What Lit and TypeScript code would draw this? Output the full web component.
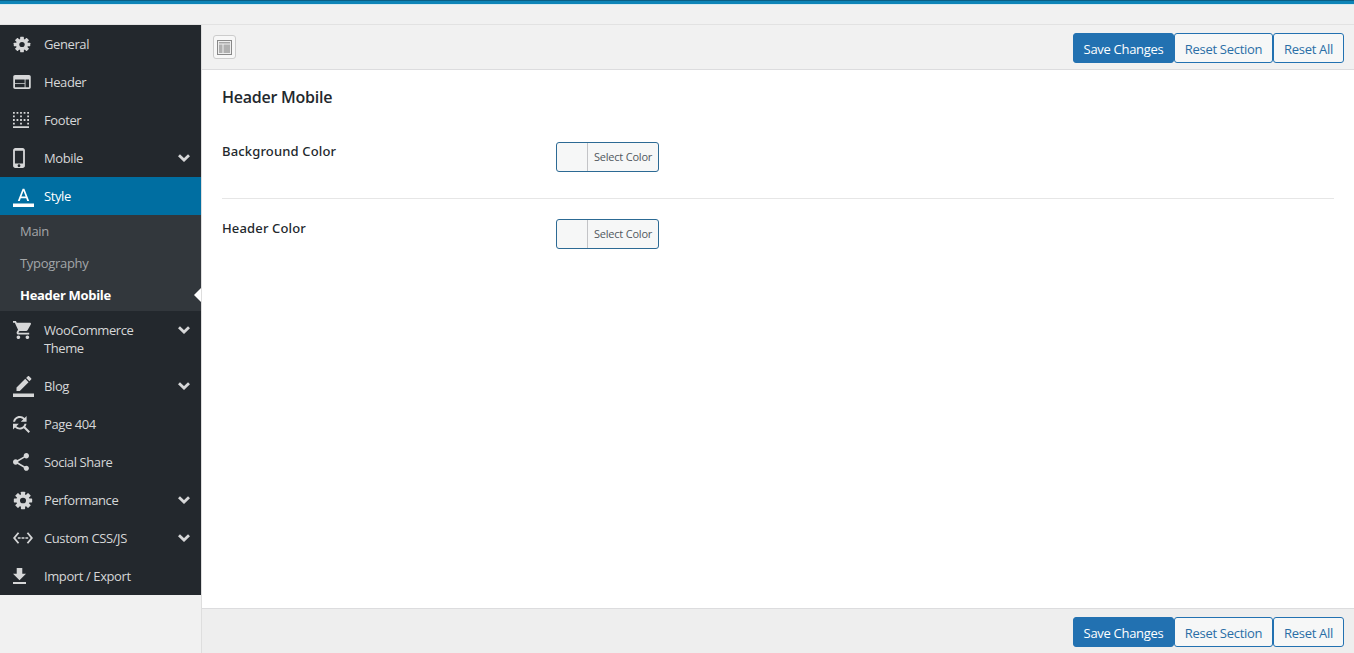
import { LitElement, html, css, svg } from "lit";
import { customElement } from "lit/decorators.js";

const gearShape = svg`
  <g fill="currentColor">
    <circle cx="12" cy="12" r="8"/>
    ${[0, 45, 90, 135, 180, 225, 270, 315].map((a) => svg`<rect x="9.500" y="1" width="5" height="5" rx=".6" transform="rotate(${a} 12 12)"/>`)}
  </g>
  <circle cx="12" cy="12" r="3.600" fill="#23282d"/>`;

const ic = (cls: string, vb: string, d: string) =>
  html`<svg class="ic ${cls}" viewBox=${vb} fill="currentColor"><path d=${d}/></svg>`;

const icons: Record<string, unknown> = {
  general: html`<svg class="ic i-gen" viewBox="0 0 24 24" preserveAspectRatio="none">${gearShape}</svg>`,
  header: ic("i-hdr", "2 4 20 16", "M20 4H4c-1.100 0-2 .9-2 2v12c0 1.100.9 2 2 2h16c1.100 0 2-.9 2-2V6c0-1.100-.9-2-2-2zm-5 14H4v-4h11v4zm0-5H4V9h11v4zm5 5h-4V9h4v9z"),
  footer: ic("i-ftr", "3 3 18 18", "M9 11H7v2h2v-2zm4 4h-2v2h2v-2zM9 3H7v2h2V3zm4 8h-2v2h2v-2zM5 3H3v2h2V3zm8 4h-2v2h2V7zm4 4h-2v2h2v-2zm-4-8h-2v2h2V3zm4 0h-2v2h2V3zm2 10h2v-2h-2v2zm0 4h2v-2h-2v2zM5 7H3v2h2V7zm14-4v2h2V3h-2zm0 6h2V7h-2v2zM5 11H3v2h2v-2zM3 21h18v-2H3v2zm2-6H3v2h2v-2z"),
  mobile: ic("i-mob", "5 1 13 22", "M15.500 1h-8C6.120 1 5 2.120 5 3.500v17C5 21.880 6.120 23 7.500 23h8c1.380 0 2.500-1.120 2.500-2.500v-17C18 2.120 16.880 1 15.500 1zm-4 21c-.830 0-1.500-.670-1.500-1.500s.670-1.500 1.500-1.500 1.500.670 1.500 1.500-.670 1.500-1.500 1.500zm4.500-4H7V4h9v14z"),
  style: ic("i-24", "0 0 24 24", "M0 20h24v4H0zM11 3 5.500 17h2.250l1.120-3h6.250l1.120 3h2.250L13 3h-2zm-1.380 9L12 5.670 14.380 12H9.620z"),
  cart: ic("i-cart", "1 2 20 20", "M7 18c-1.100 0-1.990.9-1.990 2S5.900 22 7 22s2-.9 2-2-.9-2-2-2zM1 2v2h2l3.600 7.590-1.350 2.450c-.16.280-.25.610-.25.960 0 1.100.9 2 2 2h12v-2H7.420c-.140 0-.250-.110-.250-.250l.030-.120.900-1.630h7.450c.750 0 1.410-.410 1.750-1.030l3.580-6.490c.080-.140.120-.310.120-.480 0-.550-.450-1-1-1H5.210l-.940-2H1zm16 16c-1.100 0-1.990.900-1.990 2s.890 2 1.990 2 2-.900 2-2-.900-2-2-2z"),
  blog: ic("i-24", "0 0 24 24", "M17.750 7 14 3.250l-10 10V17h3.750l10-10zm2.960-2.960c.390-.390.390-1.020 0-1.410L18.370.290c-.390-.390-1.020-.390-1.410 0L15 2.250 18.750 6l1.960-1.960zM0 20h24v4H0z"),
  page: ic("i-find", "4 4 17.500 17.500", "M11 6c1.380 0 2.630.560 3.540 1.460L12 10h6V4l-2.050 2.050C14.680 4.780 12.930 4 11 4c-3.530 0-6.430 2.610-6.920 6H6.100c.460-2.280 2.480-4 4.900-4zm5.640 9.140c.660-.900 1.110-1.970 1.280-3.140H15.900c-.460 2.280-2.480 4-4.900 4-1.380 0-2.630-.560-3.540-1.460L10 12H4v6l2.050-2.050C7.320 17.220 9.070 18 11 18c1.550 0 2.980-.510 4.140-1.360L20 21.490 21.490 20l-4.850-4.860z"),
  share: ic("i-share", "3 2 18 20", "M18 16.080c-.760 0-1.440.300-1.960.770L8.910 12.700c.050-.230.090-.460.090-.700s-.040-.470-.090-.700l7.050-4.110c.540.500 1.250.810 2.040.810 1.660 0 3-1.340 3-3s-1.340-3-3-3-3 1.340-3 3c0 .240.040.470.090.700L8.040 9.810C7.500 9.310 6.790 9 6 9c-1.660 0-3 1.340-3 3s1.340 3 3 3c.790 0 1.500-.310 2.040-.810l7.120 4.160c-.050.210-.080.430-.080.650 0 1.610 1.310 2.920 2.920 2.920 1.610 0 2.920-1.310 2.920-2.920s-1.310-2.920-2.920-2.920z"),
  perf: html`<svg class="ic i-perf" viewBox="0 0 24 24" preserveAspectRatio="none">${gearShape}</svg>`,
  code: ic("i-code", "0.800 5.400 22.400 13.200", "M7.770 6.760 6.230 5.480.820 12l5.410 6.520 1.540-1.280L3.420 12l4.350-5.240zM6.200 11.100h3.100v1.800H6.200zM10.400 11.100h3.200v1.800h-3.200zM14.700 11.100h3.100v1.800h-3.100zM17.770 5.480l-1.540 1.280L20.580 12l-4.350 5.240 1.540 1.280L23.180 12l-5.410-6.520z"),
  imp: ic("i-imp", "5 3 14 17", "M19 9h-4V3H9v6H5l7 7 7-7zM5 18v2h14v-2H5z"),
};

type Item = { key: string; label: string; arrow?: boolean; active?: boolean; tall?: boolean };
const items: Item[] = [
  { key: "general", label: "General" },
  { key: "header", label: "Header" },
  { key: "footer", label: "Footer" },
  { key: "mobile", label: "Mobile", arrow: true },
  { key: "style", label: "Style", active: true },
  { key: "cart", label: "WooCommerce Theme", arrow: true, tall: true },
  { key: "blog", label: "Blog", arrow: true },
  { key: "page", label: "Page 404" },
  { key: "share", label: "Social Share" },
  { key: "perf", label: "Performance", arrow: true },
  { key: "code", label: "Custom CSS/JS", arrow: true },
  { key: "imp", label: "Import / Export" },
];

@customElement("app-root")
export class AppRoot extends LitElement {
  static styles = css`
    :host { display: block; width: 1354px; height: 653px; overflow: hidden; background: #f1f1f1; font-family: "Open Sans", "Noto Sans", sans-serif; }
    .top { height: 5px; background: #0e85b8; border-top: 1px solid #0a5f85; border-bottom: 1px solid #d8ebf2; box-sizing: border-box; }
    .wrap { display: flex; margin-top: 19px; height: 629px; border-top: 1px solid #e2e2e2; box-sizing: border-box; }
    .side { width: 201px; flex: none; align-self: flex-start; background: #23282d; }
    .item { display: flex; align-items: center; height: 38px; color: #d6d7d8; font-size: 13px; letter-spacing: -0.4px; }
    .item.tall { height: 56px; box-sizing: border-box; align-items: flex-start; padding-top: 10px; line-height: 18px; }
    .item.tall .ico, .item.tall .chev { height: 18px; }
    .item.active { background: #006ea1; color: #fff; }
    .ico { width: 44px; flex: none; display: flex; align-items: center; padding-left: 13px; box-sizing: border-box; }
    .ic { display: block; flex: none; }
    .i-gen { width: 18px; height: 17px; }
    .i-perf { width: 20px; height: 19px; }
    .i-hdr { width: 18px; height: 14px; }
    .i-ftr { width: 16px; height: 16px; }
    .i-mob { width: 12px; height: 20px; }
    .i-24 { width: 21px; height: 21px; }
    .i-cart { width: 18px; height: 18px; }
    .i-find { width: 17px; height: 17px; }
    .i-share { width: 16px; height: 18px; }
    .i-code { width: 20px; height: 12px; }
    .i-imp { width: 13px; height: 16px; }
    .lbl { flex: 1; }
    .item.tall .lbl { max-width: 100px; }
    .chev { width: 12px; margin-right: 11px; margin-left: auto; display: flex; align-items: center; color: #d6d7d8; }
    .sub { background: #32373c; }
    .sub div { height: 32px; display: flex; align-items: center; padding-left: 20px; color: #a3a6a9; font-size: 13px; letter-spacing: -0.3px; position: relative; }
    .sub .cur { color: #fff; font-weight: 700; letter-spacing: -0.3px; }
    .sub .cur::after { content: ""; position: absolute; right: 0; top: 9px; border: 7px solid transparent; border-right-color: #fff; border-left-width: 0; }
    .main { flex: 1; display: flex; flex-direction: column; border-left: 1px solid #dedede; min-width: 0; }
    .bar { height: 44px; flex: none; background: #f1f1f1; border-bottom: 1px solid #dcdcde; display: flex; align-items: center; padding: 0 10px 0 11px; }
    .bar.bot { height: 45px; background: #eee; border-bottom: 0; border-top: 1px solid #dcdcde; box-sizing: border-box; }
    .tog { width: 23px; height: 24px; border: 1px solid #ccc; border-radius: 3px; background: #f7f7f7; box-sizing: border-box; display: flex; align-items: center; justify-content: center; }
    .btns { margin-left: auto; margin-top: 2px; display: flex; }
    .btn { height: 30px; box-sizing: border-box; border: 1px solid #2271b1; border-radius: 3px; background: #f6f7f7; color: #2a6ea6; font: inherit; font-size: 13px; letter-spacing: -0.3px; display: flex; align-items: center; justify-content: center; padding-top: 2px; }
    .btn.p { background: #2271b1; color: #fff; width: 101px; }
    .btn.s { width: 99px; }
    .btn.a { width: 71px; }
    .content { flex: 1; background: #fff; padding: 0 20px; min-height: 0; }
    h2 { margin: 0; padding-top: 15px; height: 30px; font-size: 16px; line-height: 25px; font-weight: 600; color: #23282d; letter-spacing: -0.25px; }
    .row { display: flex; align-items: flex-start; padding-top: 27px; height: 84px; box-sizing: border-box; border-bottom: 1px solid #e6e6e6; }
    .row.last { border-bottom: 0; padding-top: 20px; height: 77px; }
    .row label { width: 334px; flex: none; font-family: "Noto Sans", sans-serif; font-size: 13px; line-height: 20px; font-weight: 500; color: #23282d; letter-spacing: 0.15px; margin-top: -1px; }
    .pick { width: 103px; height: 30px; box-sizing: border-box; border: 1px solid #2c6a94; border-radius: 3px; background: #f6f7f7; display: flex; }
    .sw { width: 30px; border-right: 1px solid #c3c4c7; }
    .pt { flex: 1; font-size: 11px; letter-spacing: -0.2px; color: #50575e; display: flex; align-items: center; justify-content: center; padding-bottom: 2px; }
  `;

  private buttons() {
    return html`<div class="btns"><div class="btn p">Save Changes</div><div class="btn s">Reset Section</div><div class="btn a">Reset All</div></div>`;
  }

  private row(it: Item) {
    return html`<div class="item ${it.active ? "active" : ""} ${it.tall ? "tall" : ""}">
      <div class="ico">${icons[it.key]}</div>
      <div class="lbl">${it.label}</div>
      ${it.arrow ? html`<div class="chev"><svg width="12" height="8" viewBox="0 0 12 8" fill="none" stroke="currentColor" stroke-width="2.800"><path d="M1 1.200 6 6l5-4.800"/></svg></div>` : ""}
    </div>`;
  }

  render() {
    const i = items.findIndex((x) => x.active);
    return html`
      <div class="top"></div>
      <div class="wrap">
        <nav class="side">
          ${items.slice(0, i + 1).map((x) => this.row(x))}
          <div class="sub"><div>Main</div><div>Typography</div><div class="cur">Header Mobile</div></div>
          ${items.slice(i + 1).map((x) => this.row(x))}
        </nav>
        <div class="main">
          <div class="bar">
            <div class="tog"><svg width="15" height="15" viewBox="0 0 15 15"><rect x=".5" y=".5" width="14" height="14" fill="#eee" stroke="#888"/><rect x="2" y="2" width="11" height="1.500" fill="#a5a5a5"/><rect x="2" y="4.500" width="3.500" height="8.500" fill="#b0b0b0"/><rect x="6.500" y="4.500" width="6.500" height="8.500" fill="#b0b0b0"/></svg></div>
            ${this.buttons()}
          </div>
          <div class="content">
            <h2>Header Mobile</h2>
            <div class="row"><label>Background Color</label><div class="pick"><div class="sw"></div><div class="pt">Select Color</div></div></div>
            <div class="row last"><label>Header Color</label><div class="pick"><div class="sw"></div><div class="pt">Select Color</div></div></div>
          </div>
          <div class="bar bot">${this.buttons()}</div>
        </div>
      </div>
    `;
  }
}
